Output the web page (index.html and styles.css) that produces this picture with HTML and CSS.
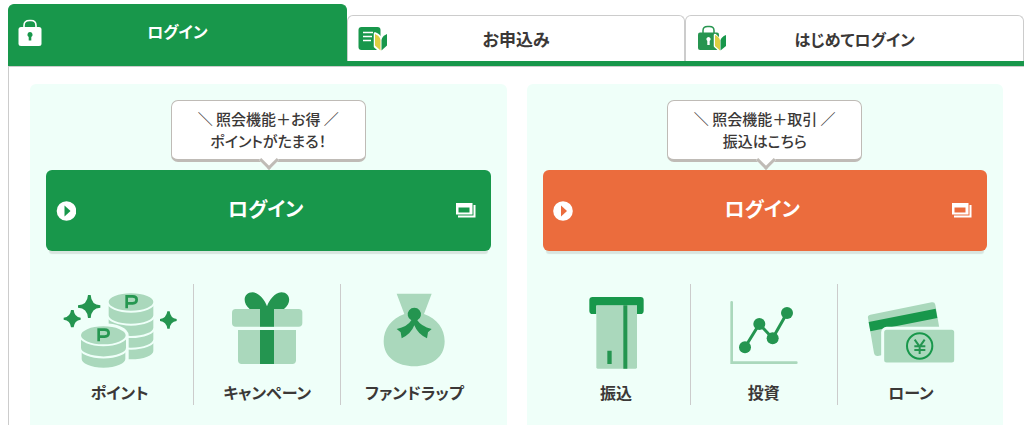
FILE: index.html
```html
<!DOCTYPE html>
<html lang="ja">
<head>
<meta charset="utf-8">
<meta name="viewport" content="width=device-width, initial-scale=1">
<title>ログイン</title>
<link rel="stylesheet" href="styles.css">
</head>
<body>
<main class="login">
  <nav class="tabs">
    <button class="tab tab-active tab-kana" type="button">
      <svg class="tab-icon" viewBox="0 0 30 28" aria-hidden="true">
        <path d="M5 9V6.500Q5 1.500 10.500 1.500H12Q17 1.500 17 6.500V9" fill="none" stroke="#fff" stroke-width="1.600"/>
        <rect x="-0.500" y="8" width="23" height="19" rx="2.500" fill="#fff"/>
        <path d="M11 13a2.700 2.700 0 0 1 1.300 5V21.500h-2.600V18A2.700 2.700 0 0 1 11 13z" fill="#18974b"/>
      </svg>
      <span class="tab-label">ログイン</span>
    </button>
    <button class="tab" type="button">
      <svg class="tab-icon" viewBox="0 0 30 28" aria-hidden="true">
        <rect x="0.500" y="2" width="22" height="23" rx="3" fill="#18974b"/>
        <path d="M5 7.500H15M5 11.500H14M5 15.500H13" stroke="#fff" stroke-width="1.400"/>
        <path d="M17 8.500q5 2 5.700 6 .7-4 5.300-6l1 1v11l-6.300 6-5.700-5z" fill="#fff" stroke="#fff" stroke-width="2.500" stroke-linejoin="round"/>
        <path d="M17 9q5 2 5.500 6v10.500l-5.500-5z" fill="#ddcf42"/>
        <path d="M23.500 15q.5-4 5.500-6v11.500l-5.500 5z" fill="#18974b"/>
      </svg>
      <span class="tab-label">お申込み</span>
    </button>
    <button class="tab tab-kana" type="button">
      <svg class="tab-icon" viewBox="-2 0 30 28" aria-hidden="true">
        <path d="M5 9V5.500Q5 1.500 9.500 1.500H11.500Q16 1.500 16 5.500V9" fill="none" stroke="#279550" stroke-width="1.500"/>
        <rect x="0" y="7.500" width="21" height="17.500" rx="2" fill="#279550"/>
        <path d="M10.500 12a2.200 2.200 0 0 1 1.200 4V20H9.300V16A2.200 2.200 0 0 1 10.500 12z" fill="#fff"/>
        <path d="M17 10l5 5 5.500-5v11l-5.500 4.500-5-4.500z" fill="#fff" stroke="#fff" stroke-width="2.500" stroke-linejoin="round"/>
        <path d="M17 10q4.500 2 5 5.500v10l-5-4.500z" fill="#ddcf42"/>
        <path d="M22.500 15.500q.5-3.500 5.500-5.500v11l-5.500 4.500z" fill="#18974b"/>
      </svg>
      <span class="tab-label">はじめてログイン</span>
    </button>
  </nav>

  <div class="panel">
    <section class="card">
      <p class="bubble">＼ 照会機能＋お得 ／<br>ポイントがたまる！</p>
      <a class="cta cta-green" href="#">
        <svg class="cta-arrow" viewBox="0 0 20 20" aria-hidden="true"><circle cx="10.500" cy="10" r="9.800" fill="#fff"/><path d="M8.500 4.500l6 5.500-6 5.500z" fill="currentColor"/></svg>
        <span class="cta-label">ログイン</span>
        <svg class="cta-window" viewBox="0 0 20 15" aria-hidden="true"><path d="M0 0H16.500V11.500H0zM2.500 4.500V9.500H13.500V4.500z" fill="#fff" fill-rule="evenodd"/><path d="M17.500 2H19.500V14.500H2V12.500H17.500z" fill="#fff"/></svg>
      </a>
      <ul class="links">
        <li><a href="#">
          <svg class="art" viewBox="30 39 360 264" aria-hidden="true">
            <g fill="#aad8bc" stroke="#effff9" stroke-width="6">
              <path d="M173 184V228A70 28 0 0 0 313 228V184z"/>
              <path d="M173 150V193A70 28 0 0 0 313 193V150z"/>
              <path d="M173 116V158A70 28 0 0 0 313 158V116z"/>
              <path d="M173 80V121A70 28 0 0 0 313 121V80z"/>
              <ellipse cx="243" cy="81" rx="70" ry="29"/>
              <path d="M90 181V252A70 31 0 0 0 231 252V181A70 31 0 0 0 90 181z" stroke-width="10"/>
              <path d="M90 181V218A70 29 0 0 0 231 218V181z"/>
              <ellipse cx="160" cy="181" rx="70" ry="30"/>
            </g>
            <g fill="none" stroke="#269751" stroke-width="8">
              <path d="M230 100V64H248Q260 64 260 74T248 85H230"/>
              <path d="M146 199V164H164Q176 164 176 174T164 185H146"/>
            </g>
            <g fill="#249550">
              <path d="M114 60H122Q124 90 151 91V98Q124 99 122 129H114Q112 99 84 98V91Q112 90 114 60z"/>
              <path d="M63 105H71Q73 126 92 128V134Q73 136 71 157H63Q61 136 41 134V128Q61 126 63 105z"/>
              <path d="M352 109H359Q361 130 380 132V138Q361 140 359 161H352Q349 140 330 138V132Q349 130 352 109z"/>
            </g>
          </svg>
          <span>ポイント</span>
        </a></li>
        <li><a href="#">
          <svg class="art" viewBox="21 39 360 264" aria-hidden="true">
            <rect x="96" y="102" width="211" height="53" rx="11" fill="#aad8bc"/>
            <path d="M114 165H288V256Q288 267 277 267H125Q114 267 114 256z" fill="#aad8bc"/>
            <path d="M180 102H149C125 82 131 52 158 52C179 54 194 75 201 94C208 75 223 54 244 52C270 52 277 82 252 102H222V155H180zM180 165H222V267H180z" fill="#249550"/>
          </svg>
          <span>キャンペーン</span>
        </a></li>
        <li><a href="#">
          <svg class="art" viewBox="48 39 360 264" aria-hidden="true">
            <path d="M176 56H281L258 117C298 131 320 162 320 199C320 249 279 274 229 274S137 249 137 199C137 162 160 131 199 117z" fill="#aad8bc"/>
            <path d="M220 136A20 20 0 1 1 238 136Q249 154 281 162L270 172L267 190Q239 177 229 151Q219 177 191 190L188 172L176 162Q209 155 220 136z" fill="#249550"/>
          </svg>
          <span>ファンドラップ</span>
        </a></li>
      </ul>
    </section>

    <section class="card">
      <p class="bubble">＼ 照会機能＋取引 ／<br>振込はこちら</p>
      <a class="cta cta-orange" href="#">
        <svg class="cta-arrow" viewBox="0 0 20 20" aria-hidden="true"><circle cx="10" cy="10" r="9.800" fill="#fff"/><path d="M8 4.500l6 5.500-6 5.500z" fill="currentColor"/></svg>
        <span class="cta-label">ログイン</span>
        <svg class="cta-window" viewBox="0 0 20 15" aria-hidden="true"><path d="M0 0H16.500V11.500H0zM2.500 4.500V9.500H13.500V4.500z" fill="#fff" fill-rule="evenodd"/><path d="M17.500 2H19.500V14.500H2V12.500H17.500z" fill="#fff"/></svg>
      </a>
      <ul class="links">
        <li><a href="#">
          <svg class="art" viewBox="-12 39 360 264" aria-hidden="true">
            <path d="M98 66H242Q251 66 251 75V107Q251 117 241 117H231V92H109V117H98Q88 117 88 107V75Q88 66 98 66z" fill="#18974b"/>
            <path d="M109 91H231V277Q231 281 227 281H113Q109 281 109 277z" fill="#aad8bc"/>
            <path d="M190 91H202V281H190zM142 227H155V267H142z" fill="#249550"/>
          </svg>
          <span>振込</span>
        </a></li>
        <li><a href="#">
          <svg class="art" viewBox="39 39 360 264" aria-hidden="true">
            <path d="M122 82V263H316" fill="none" stroke="#aad8bc" stroke-width="8" stroke-linecap="round"/>
            <path d="M162 217L205 147L245 190L288 114" fill="none" stroke="#249550" stroke-width="9"/>
            <g fill="#249550"><circle cx="162" cy="217" r="18"/><circle cx="205" cy="147" r="18"/><circle cx="245" cy="190" r="18"/><circle cx="288" cy="114" r="18"/></g>
          </svg>
          <span>投資</span>
        </a></li>
        <li><a href="#">
          <svg class="art" viewBox="36 39 360 264" aria-hidden="true">
            <path d="M94 119L278 82Q287 80 289 89L303 170L127 241L117 243Q107 244 105 234L87 129Q85 121 94 119z" fill="#aad8bc"/>
            <path d="M89 141L290 101L295 129L94 169z" fill="#18974b"/>
            <rect x="131" y="160" width="219" height="107" rx="12" fill="#aad8bc" stroke="#effff9" stroke-width="9"/>
            <circle cx="242" cy="213" r="38" fill="none" stroke="#18974b" stroke-width="6"/>
            <path d="M227 194L242 215L257 194M242 214V237M226 214H259M226 225H259" fill="none" stroke="#249550" stroke-width="6"/>
          </svg>
          <span>ローン</span>
        </a></li>
      </ul>
    </section>
  </div>
</main>
</body>
</html>
```
FILE: styles.css
```css
* {
  box-sizing: border-box;
}

body {
  margin: 0;
  background: #fff;
  color: #3b3837;
  font-family: "Noto Sans CJK JP", sans-serif;
  font-feature-settings: "palt";
}

a {
  color: inherit;
  text-decoration: none;
}

.login {
  padding: 4px 0 0 8px;
}

.tabs {
  display: grid;
  grid-template-columns: repeat(3, 1fr);
  align-items: end;
  border-bottom: 5px solid #18974b;
}

.tab {
  display: grid;
  grid-template-columns: 30px 1fr 30px;
  align-items: center;
  height: 46px;
  margin: 0;
  padding: 0 10px;
  border: 1px solid #ccc;
  border-bottom: 0;
  border-radius: 6px 6px 0 0;
  background: #fff;
  color: inherit;
  font: inherit;
  font-feature-settings: inherit;
  font-size: 17px;
  font-weight: 700;
  line-height: 24px;
  cursor: pointer;
}

.tab-kana {
  font-size: 16px;
}

.tab-active {
  height: 57px;
  border-color: #18974b;
  background: #18974b;
  color: #fff;
}

.tab-active .tab-label {
  padding-bottom: 4px;
}

.tab-icon {
  width: 30px;
  height: 28px;
  overflow: visible;
}

.panel {
  display: grid;
  grid-template-columns: 1fr 1fr;
  gap: 20px;
  padding: 17px 21px 0;
  border: 1px solid #ccc;
  border-width: 1px 0 0 1px;
}

.card {
  padding: 16px 16px 20px;
  border-radius: 6px 6px 0 0;
  background: #effff9;
}

.bubble {
  position: relative;
  width: 195px;
  margin: 0 auto 8px;
  padding: 7px 0;
  border: 1px solid #bfbbb6;
  border-bottom-width: 3px;
  border-radius: 7px;
  background: #fff;
  font-size: 15px;
  font-weight: 500;
  line-height: 22px;
  text-align: center;
}

.bubble::after {
  content: "";
  position: absolute;
  top: 100%;
  left: 50%;
  width: 11px;
  height: 11px;
  margin: -6px 0 0 -6px;
  border: solid #bfbbb6;
  border-width: 0 3px 3px 0;
  background: #fff;
  transform: rotate(45deg);
}

.cta {
  display: grid;
  grid-template-columns: 20px 1fr 20px;
  align-items: center;
  height: 81px;
  padding: 0 15px 0 10px;
  border-radius: 6px;
  box-shadow: 0 6px 1px -3px #d8e5df;
  color: #fff;
  font-size: 20px;
  font-weight: 700;
  line-height: 32px;
  text-align: center;
}

.cta-label {
  padding-bottom: 3px;
}

.cta-green {
  background: #18974b;
}

.cta-orange {
  background: #eb6c3d;
}

.cta-arrow {
  width: 20px;
  height: 20px;
}

.cta-green .cta-arrow {
  color: #18974b;
}

.cta-orange .cta-arrow {
  color: #eb6c3d;
}

.cta-window {
  width: 20px;
  height: 15px;
}

.links {
  display: grid;
  grid-template-columns: repeat(3, 1fr);
  margin: 33px 0 0;
  padding: 0 3px 0 0;
  list-style: none;
}

.links li + li {
  border-left: 1px solid #ccc;
}

.links a {
  display: flex;
  flex-direction: column;
  align-items: center;
  gap: 4px;
  padding: 4px 0 0;
  height: 121px;
  font-size: 16px;
  font-weight: 700;
  line-height: 24px;
}

.art {
  width: 120px;
  height: 88px;
}
```
